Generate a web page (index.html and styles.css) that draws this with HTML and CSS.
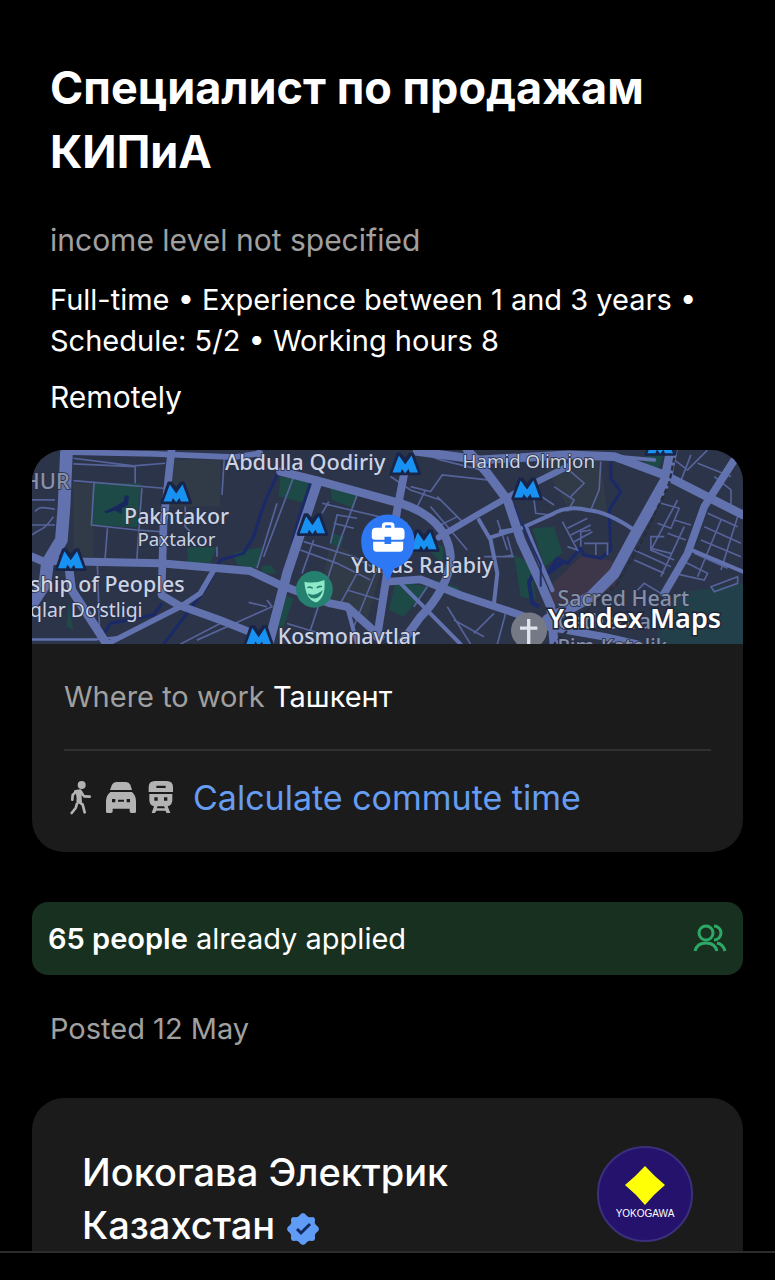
FILE: index.html
```html
<!DOCTYPE html>
<html lang="en">
<head>
<meta charset="utf-8">
<meta name="viewport" content="width=device-width, initial-scale=1">
<title>Специалист по продажам КИПиА</title>
<link rel="stylesheet" href="styles.css">
</head>
<body>
<main class="page">
  <header class="summary">
    <h1 class="title" lang="ru">Специалист по продажам КИПиА</h1>
    <p class="income">income level not specified</p>
    <p class="terms">Full-time • Experience between 1 and 3 years • Schedule: 5/2 • Working hours 8</p>
    <p class="remote">Remotely</p>
  </header>

  <section class="card place">
    <svg class="map" viewBox="36 30 2130 582" preserveAspectRatio="xMidYMid slice" role="img" aria-label="Map of the workplace">
      <defs>
        <g id="metro">
          <path d="M-42 31L-22-27H-15L0-8L15-27H22L42 31Z" fill="#182448" stroke="#182448" stroke-width="10" stroke-linejoin="round"/>
          <path d="M-38 28L-19-23L0 4L19-23L38 28H14L10 17L0 30L-10 17L-14 28Z" fill="#1792f2"/>
        </g>
      </defs>
      <rect x="36" y="30" width="2130" height="582" fill="#2c3449"/>
      <g fill="#313a47">
        <path d="M160 130H220V350H160Z M450 60H600V200H450Z M930 300L1080 400L1040 540L900 460Z M1560 60H1740L1760 220L1640 200Z"/>
      </g>
      <g fill="#1d4a47">
        <path d="M222 130H362L350 262L216 255Z M500 322H590L570 368H505Z M640 340L725 320L710 385L650 375Z M780 110L870 125L860 190L775 170Z M930 145L1010 165L1000 205L935 180Z M935 280L970 290L960 325L930 310Z M1125 425L1225 440L1150 530L1105 510Z M1250 420L1320 445L1290 455L1240 445Z M780 460L820 475L790 560L755 560Z M1535 265L1600 260L1625 340L1570 380Z M1480 345L1530 370L1545 480L1500 470Z M1880 40H1930L1910 95L1870 75Z M1240 310L1270 320L1265 370L1235 340Z M145 490L160 570L140 560Z M720 380L750 375L770 400L730 400Z"/>
        <path d="M1960 460L2166 430V612H1900Z" fill="#22404a"/>
      </g>
      <path d="M1585 440L1680 350L1760 360L1810 370L1780 440L1700 490L1590 500Z" fill="#3e374a"/>
      <g fill="none" stroke="#19296a" stroke-width="9" stroke-linejoin="round">
        <path d="M775 95L745 160L725 210L700 290L670 340L600 360L560 440L470 560L430 612 M425 490L400 525L270 550L240 600 M870 130L840 220L815 310"/>
        <path d="M1770 65V115L1800 155L1765 210L1770 330L1740 355L1690 345L1680 325L1640 370L1610 355L1580 400"/>
        <path d="M1545 395L1525 425L1535 490L1555 500" stroke-width="12"/>
        <path d="M1580 400L1600 375L1630 365L1590 395Z" fill="#19296a"/>
      </g>
      <path d="M252 215L285 200L310 185L314 167H326L324 195L305 205V222L285 212L258 220Z" fill="#18275d"/>
      <g fill="none" stroke="#56639a" stroke-width="5">
        <path d="M160 55L340 78L435 70 M160 72L345 80V130 M160 122L430 145 M222 125L214 255L350 270L420 275 M365 145L350 360 M262 265L255 355 M36 180H105 M36 255H105 M45 215C60 195 80 205 105 208 M36 285C60 265 70 275 100 230 M612 55L605 165 M495 200V260L510 275 M590 320V350 M232 378L238 560 M685 487L740 500 M740 480L755 500L530 600 M620 540L480 612"/>
        <path d="M770 190L710 385 M820 110L730 350 M905 190L1160 250 M1010 165L960 300L870 570 M905 220L925 185 M930 310L950 225L1010 235 M940 250L1000 265 M850 305L1000 350L1110 410 M840 330L950 370L1050 420 M880 300L845 400 M980 450L1080 480 M1080 360L1060 410L1000 560 M1015 390L960 490 M800 550L900 580 M1110 110L1170 150L1260 180 M1180 30L1260 60L1380 90 M1170 140L1230 155L1265 105L1400 120 M1190 200L1215 150 M1230 200L1340 330 M1250 170L1330 250 M1310 230L1250 260 M1430 240L1460 330 M1390 350H1480 M1220 440L1180 500 M1280 500L1350 612 M1300 540L1390 590 M1420 520L1360 580 M1460 500L1430 612"/>
        <path d="M1540 155L1600 195 M1600 140L1660 180L1640 215 M1650 95L1690 130L1650 170 M1740 65L1735 150L1710 210 M1540 180L1545 220L1590 225 M1625 245L1670 330L1640 320 M1640 265L1700 235 M1650 285L1710 255 M1660 305L1715 275 M1680 320V275L1710 270 M1690 310H1760V345 M1725 310V345 M1450 350L1475 345L1460 290"/>
        <path d="M1960 60L2000 90L2060 30 M2010 45L1975 135 M2030 70L2130 110 M2130 200V150L2080 110 M1970 180L1890 330L1960 360 M1920 190L1975 205L1950 265L1910 250 M1930 290L1890 290V325L1950 340 M1840 330L1950 380 M1840 360L1930 400 M1990 260L1920 410 M1940 280L1995 300 M1960 240L2010 255 M2100 240L2030 410 M2060 220L2150 260 M2050 260L2160 310 M2040 300L2160 350 M2020 340L2120 385 M2150 230L2100 390 M1980 360L2060 400L2050 420L1960 400 M2070 440L2150 410V430L2080 455Z M1850 450L1870 430L1920 460L1950 490"/>
      </g>
      <g fill="none" stroke="#6172ae" stroke-linecap="round" stroke-linejoin="round">
        <path d="M140 20L132 200L124 300L82 370L75 430L36 490" stroke-width="38"/>
        <path d="M145 370L155 450L265 620" stroke-width="26"/>
        <path d="M36 350L65 362L420 370L690 393L780 435L930 490L980 500L1080 590" stroke-width="24"/>
        <path d="M20 598H230L300 590" stroke-width="7"/>
        <path d="M155 37L400 42L640 52L720 40" stroke-width="17"/>
        <path d="M455 20L430 250L424 465L475 495L600 540L700 580" stroke-width="23"/>
        <path d="M585 382L540 460L480 500L260 612" stroke-width="16"/>
        <path d="M715 20V50" stroke-width="12"/>
        <path d="M780 95L890 122L1120 185C1230 212 1285 275 1290 350C1290 410 1250 480 1200 530L1140 612" stroke-width="25"/>
        <path d="M892 125L800 400L745 612" stroke-width="29"/>
        <path d="M1155 80L1130 210L1095 430L1070 590" stroke-width="24"/>
        <path d="M1100 425L1200 418L1320 465L1500 525L1580 560L1750 590L1850 612" stroke-width="23"/>
        <path d="M1255 292L1360 230L1500 150L1640 80" stroke-width="19"/>
        <path d="M1190 35L1380 60L1640 45L1780 50L1930 105L2166 225" stroke-width="26"/>
        <path d="M1340 30L1400 100L1460 180L1500 300L1560 430L1590 500L1600 612" stroke-width="27"/>
        <path d="M1515 260L1560 370L1595 450" stroke-width="13"/>
        <path d="M1955 20L1935 120L1845 280L1780 400L1710 470L1580 540" stroke-width="34"/>
        <path d="M2140 60L2050 200L2000 340L1930 460" stroke-width="23"/>
        <path d="M2000 325L2166 395 M1375 240L1410 300L1430 400L1420 490 M1410 292L1480 270 M1135 425L1320 612 M980 500L1010 612 M1780 50L1900 60" stroke-width="12"/>
        <path d="M1440 275L1500 265L1590 225Q1640 195 1700 210Q1760 215 1840 270" stroke-width="12"/>
      </g>
      <path d="M1482 195L1525 300L1560 375V440" fill="none" stroke="#22306a" stroke-width="6"/>
      <path d="M1965 30L1945 130L1860 310L1790 430L1720 490L1600 612" fill="none" stroke="#272d3b" stroke-width="7" stroke-dasharray="15 9"/>
      <g class="map-labels">
        <text x="10" y="147" class="label dim" font-size="66">HUR</text>
        <text x="614" y="91" class="label" font-size="65">Abdulla Qodiriy</text>
        <text x="1326" y="85" class="label thin" font-size="56">Hamid Olimjon</text>
        <text x="312" y="251" class="label" font-size="64">Pakhtakor</text>
        <text x="352" y="318" class="label thin" font-size="56">Paxtakor</text>
        <text x="30" y="455" class="label" font-size="64">ship of Peoples</text>
        <text x="30" y="532" class="label thin" font-size="58">qlar Do‘stligi</text>
        <text x="992" y="398" class="label" font-size="64">Yunus Rajabiy</text>
        <text x="772" y="612" class="label" font-size="64">Kosmonavtlar</text>
        <text x="1610" y="497" class="label dim" font-size="64">Sacred Heart</text>
        <text x="1610" y="566" class="label dim" font-size="64">Cathedral</text>
        <text x="1610" y="640" class="label dim" font-size="60">Rim-Katolik</text>
      </g>
      <use href="#metro" x="468" y="157"/>
      <use href="#metro" x="152" y="357"/>
      <use href="#metro" x="715" y="587"/>
      <use href="#metro" x="1154" y="70"/>
      <use href="#metro" x="876" y="252"/>
      <use href="#metro" x="1210" y="300"/>
      <use href="#metro" x="1519" y="145"/>
      <use href="#metro" x="1918" y="12"/>
      <circle cx="882" cy="448" r="55" fill="#25806f"/>
      <path d="M852 425Q883 432 912 420Q917 475 887 487Q856 480 852 425Z" fill="#8ee9c9"/>
      <path d="M861 443Q870 437 877 445 M889 444Q896 436 905 440 M864 462Q882 472 903 456Q894 479 872 471Z" fill="#25806f" stroke="#25806f" stroke-width="4"/>
      <circle cx="1525" cy="571" r="54" fill="#747985"/>
      <path d="M1524 537V612 M1498 564H1550" stroke="#dfe4ed" stroke-width="10"/>
      <path d="M1102 424L1083 386Q1022 365 1022 304A80 80 0 0 1 1182 304Q1182 365 1121 386Z" fill="#2c78f5"/>
      <path d="M1066 263Q1054 263 1054 276V292Q1054 299 1063 299H1092V290H1112V299H1143Q1152 299 1152 292V276Q1152 263 1140 263H1122V258Q1122 247 1111 247H1095Q1084 247 1084 258V263Z M1094 263V259Q1094 256 1097 256H1109Q1112 256 1112 259V263Z M1058 305H1092V312H1112V305H1148V325Q1148 335 1138 335H1068Q1058 335 1058 325Z" fill="#fff" fill-rule="evenodd"/>
      <text x="1581" y="565" class="brand" font-size="81">Yandex Maps</text>
    </svg>
    <div class="place-body">
      <p class="where"><span class="muted">Where to work</span> <span lang="ru">Ташкент</span></p>
      <a class="commute" href="#commute">
        <svg class="modes" viewBox="60 48 312 105" aria-hidden="true" fill="#b3b3b3">
          <circle cx="95" cy="63" r="12"/>
          <path d="M76 82L91 80L99 93 M103 97L119 98 M90 85L83 111L98 122L104 145 M81 119L77 132L65 147 M76 85L68 93L67 107" fill="none" stroke="#b3b3b3" stroke-width="8" stroke-linecap="round" stroke-linejoin="round"/>
          <path d="M77 82H94L96 117L82 119Z"/>
          <path d="M180 78L186 62Q190 54 199 54H228Q237 54 241 62L246 78Z"/>
          <path fill-rule="evenodd" d="M181 84H246Q258 95 258 111V143Q258 147 253 147H244Q239 147 239 142V134H188V142Q188 147 183 147H173Q168 147 168 143V111Q168 95 181 84Z M186 105V115H196V105Z M204 107V113H222V107Z M230 105V115H240V105Z"/>
          <path fill-rule="evenodd" d="M296 84V70Q296 51 315 51H350Q369 51 369 70V84Z M319 65V72H347V65Z M298 90H367V108Q367 124 353 127L361 147H350L346 140H319L315 147H305L312 127Q298 124 298 108Z M313 100V110H323V100Z M342 100V110H352V100Z M323 127L320 133H345L342 127Z"/>
        </svg>
        <span>Calculate commute time</span>
      </a>
    </div>
  </section>

  <section class="applied">
    <p><strong>65 people</strong> already applied</p>
    <svg class="people" viewBox="0 0 34 30" aria-hidden="true" fill="none" stroke="#2ea866" stroke-width="3">
      <circle cx="13" cy="9" r="7"/>
      <path d="M21 2A7 7 0 0 1 21 16 M2 27Q4 19 13 19T24 27 M24 19Q30 20 32 27"/>
    </svg>
  </section>

  <p class="posted">Posted 12 May</p>

  <section class="card company">
    <h2 class="company-name" lang="ru">Иокогава Электрик Казахстан
      <svg class="verified" viewBox="0 0 32 32" role="img" aria-label="Verified">
        <path d="M16 0Q18 0 20 3Q22 5 25 4Q28 4 28 7Q27 10 29 12Q32 14 32 16T29 20Q27 22 28 25Q28 28 25 28Q22 27 20 29Q18 32 16 32T12 29Q10 27 7 28Q4 28 4 25Q5 22 3 20Q0 18 0 16T3 12Q5 10 4 7Q4 4 7 4Q10 5 12 3Q14 0 16 0Z" fill="#609cf6"/>
        <path d="M10 16L14 20L23 11" fill="none" stroke="#12285c" stroke-width="3"/>
      </svg>
    </h2>
    <svg class="logo" viewBox="0 0 96 96" role="img" aria-label="Yokogawa">
      <circle cx="48" cy="48" r="47" fill="#24126c" stroke="#3c307c" stroke-width="2"/>
      <path d="M48 20Q58 31 68 39Q57 48 48 59Q39 48 28 39Q38 31 48 20Z" fill="#ffff05"/>
      <text x="48" y="71" text-anchor="middle" class="logo-text">YOKOGAWA</text>
    </svg>
  </section>
</main>
<footer class="bottom-bar"></footer>
</body>
</html>
```
FILE: styles.css
```css
* {
  box-sizing: border-box;
}

body {
  margin: 0;
  height: 100vh;
  display: flex;
  flex-direction: column;
  background: #000;
  color: #fff;
  font-family: Inter, "Liberation Sans", sans-serif;
  font-size: 29px;
  line-height: 41px;
}

h1, h2, p {
  margin: 0;
}

.page {
  flex: 1;
  min-height: 0;
  overflow-y: auto;
  scrollbar-width: none;
  padding: 56px 32px 0;
}

.summary {
  padding: 0 18px;
}

.title {
  font-size: 45px;
  line-height: 64px;
  font-weight: 700;
}

.income {
  margin-top: 36px;
  color: #a0a0a0;
  font-size: 30px;
}

.terms {
  margin-top: 18px;
}

.remote {
  margin-top: 16px;
  font-size: 30px;
}

.muted {
  color: #a0a0a0;
}

.card {
  background: #1b1b1b;
  border-radius: 32px;
  overflow: hidden;
}

.place {
  margin-top: 32px;
}

.map {
  display: block;
  width: 100%;
  height: 194px;
}

.label {
  font-family: "Noto Sans", "Open Sans", sans-serif;
  font-weight: 500;
  fill: #ccd3e2;
  stroke: #28304a;
  stroke-width: 5px;
  paint-order: stroke;
}

.thin {
  font-weight: 400;
}

.dim {
  fill: #8790a6;
}

.brand {
  font-family: "Noto Sans", "Open Sans", sans-serif;
  font-weight: 600;
  fill: #fff;
  stroke: #1f2638;
  stroke-width: 9px;
  paint-order: stroke;
}

.place-body {
  padding: 32px;
}

.where {
  padding-bottom: 32px;
  border-bottom: 2px solid #303030;
}

.commute {
  display: flex;
  align-items: center;
  gap: 19px;
  margin-top: 26px;
  margin-bottom: 2px;
  color: #669df2;
  font-size: 34px;
  text-decoration: none;
}

.modes {
  width: 104px;
  height: 35px;
  margin-left: 6px;
}

.applied {
  display: flex;
  align-items: center;
  justify-content: space-between;
  margin-top: 50px;
  padding: 16px;
  border-radius: 16px;
  background: #18301f;
}

.applied strong {
  font-weight: 600;
}

.people {
  width: 34px;
  height: 30px;
}

.posted {
  margin-top: 33px;
  padding: 0 18px;
  color: #a0a0a0;
}

.company {
  display: flex;
  align-items: flex-start;
  justify-content: space-between;
  gap: 24px;
  margin-top: 49px;
  padding: 48px 50px;
}

.company-name {
  flex: 1;
  max-width: 420px;
  font-size: 38px;
  line-height: 53px;
  font-weight: 500;
}

.verified {
  width: 32px;
  height: 32px;
  margin-left: 2px;
  vertical-align: middle;
}

.logo {
  width: 96px;
  height: 96px;
}

.logo-text {
  font-family: "Liberation Sans", sans-serif;
  font-size: 10px;
  fill: #fff;
}

.bottom-bar {
  flex: none;
  height: 29px;
  border-top: 2px solid #2c2c2e;
  background: #000;
}
```
